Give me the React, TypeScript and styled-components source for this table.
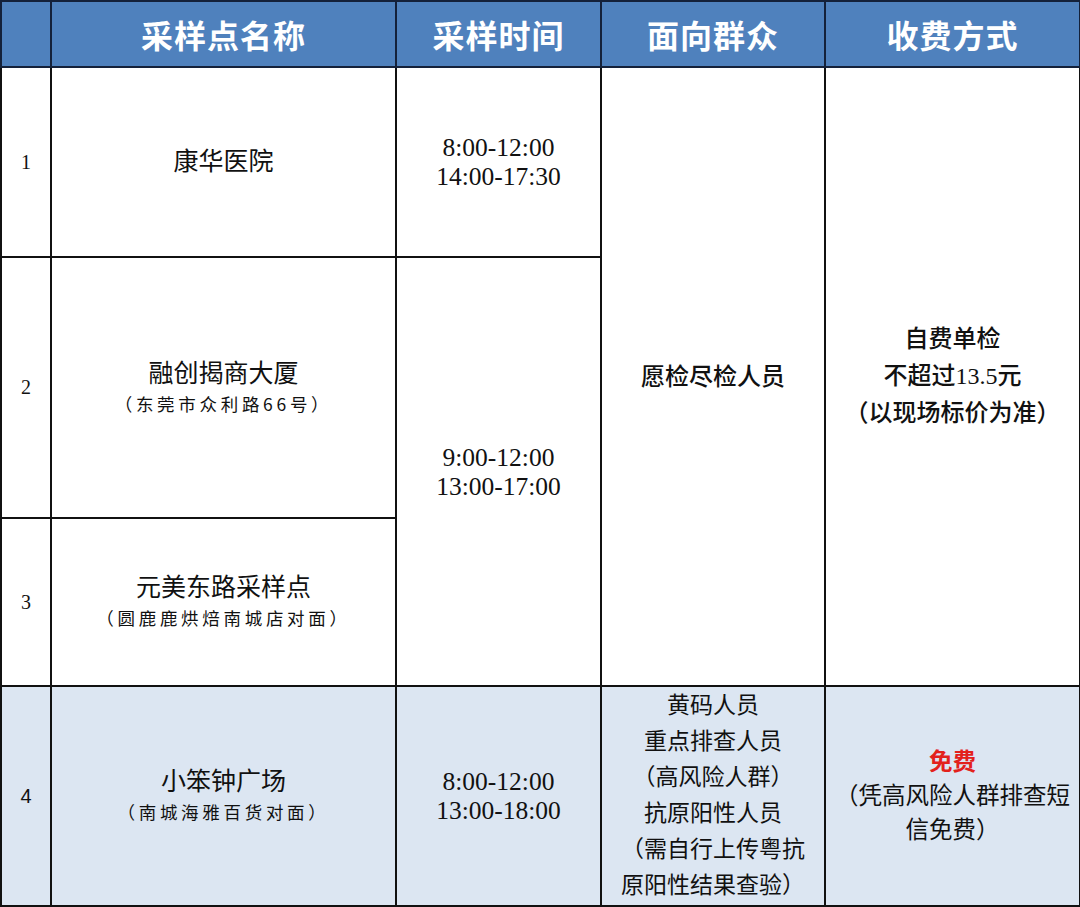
import React from 'react';
import styled, { createGlobalStyle } from 'styled-components';

const GlobalStyle = createGlobalStyle`
  html, body {
    margin: 0;
    padding: 0;
    background: #ffffff;
  }
  body {
    font-family: "Liberation Serif", "Noto Sans CJK SC", serif;
    color: #151515;
  }
`;

const Table = styled.table`
  width: 1079px;
  border-collapse: collapse;
  table-layout: fixed;
`;

const HeadCell = styled.th`
  height: 64px;
  padding: 0;
  background: #4f81bd;
  border: 2px solid #14213a;
  color: #ffffff;
  font-family: "Noto Sans CJK SC", sans-serif;
  font-size: 32px;
  font-weight: 700;
  text-align: center;
  vertical-align: middle;
  letter-spacing: 1px;
`;

const Row = styled.tr<{ $h: number }>`
  height: ${(p) => p.$h}px;
`;

const Cell = styled.td<{ $tint?: boolean }>`
  padding: 0;
  border: 2px solid #111111;
  background: ${(p) => (p.$tint ? '#dce6f2' : '#ffffff')};
  text-align: center;
  vertical-align: middle;
`;

const Num = styled.div<{ $sans?: boolean }>`
  font-family: ${(p) =>
    p.$sans ? '"Liberation Sans", sans-serif' : '"Liberation Serif", serif'};
  font-size: 20px;
  color: #111;
`;

const Name = styled.div`
  font-family: "Liberation Serif", "Noto Sans CJK SC", serif;
  font-size: 25px;
  line-height: 32px;
  color: #111;
`;

const Sub = styled.div`
  font-family: "Noto Sans CJK SC", serif;
  font-size: 17.5px;
  line-height: 28px;
  letter-spacing: 3.7px;
  color: #111;
`;

const Time = styled.div`
  font-family: "Liberation Serif", serif;
  font-size: 25.5px;
  line-height: 29px;
  color: #111;
`;

const Text = styled.div<{ $lh?: number; $size?: number; $weight?: number; $red?: boolean }>`
  font-family: "Liberation Serif", "Noto Sans CJK SC", serif;
  font-size: ${(p) => p.$size ?? 24}px;
  line-height: ${(p) => p.$lh ?? 36}px;
  font-weight: ${(p) => p.$weight ?? 400};
  color: ${(p) => (p.$red ? '#e3211c' : '#111')};
  white-space: nowrap;
`;

export default function App() {
  return (
    <>
      <GlobalStyle />
      <Table>
        <colgroup>
          <col style={{ width: 50 }} />
          <col style={{ width: 345 }} />
          <col style={{ width: 205 }} />
          <col style={{ width: 224 }} />
          <col style={{ width: 255 }} />
        </colgroup>
        <thead>
          <tr>
            <HeadCell></HeadCell>
            <HeadCell>采样点名称</HeadCell>
            <HeadCell>采样时间</HeadCell>
            <HeadCell>面向群众</HeadCell>
            <HeadCell>收费方式</HeadCell>
          </tr>
        </thead>
        <tbody>
          <Row $h={190}>
            <Cell>
              <Num>1</Num>
            </Cell>
            <Cell>
              <Name>康华医院</Name>
            </Cell>
            <Cell>
              <Time>8:00-12:00</Time>
              <Time>14:00-17:30</Time>
            </Cell>
            <Cell rowSpan={3}>
              <Text $weight={500}>愿检尽检人员</Text>
            </Cell>
            <Cell rowSpan={3}>
              <Text $weight={500} $lh={37}>自费单检</Text>
              <Text $weight={500} $lh={37}>不超过13.5元</Text>
              <Text $weight={500} $lh={37}>（以现场标价为准）</Text>
            </Cell>
          </Row>
          <Row $h={261}>
            <Cell>
              <Num>2</Num>
            </Cell>
            <Cell>
              <Name>融创揭商大厦</Name>
              <Sub>（东莞市众利路66号）</Sub>
            </Cell>
            <Cell rowSpan={2}>
              <Time>9:00-12:00</Time>
              <Time>13:00-17:00</Time>
            </Cell>
          </Row>
          <Row $h={168}>
            <Cell>
              <Num>3</Num>
            </Cell>
            <Cell>
              <Name>元美东路采样点</Name>
              <Sub>（圆鹿鹿烘焙南城店对面）</Sub>
            </Cell>
          </Row>
          <Row $h={220}>
            <Cell $tint>
              <Num $sans>4</Num>
            </Cell>
            <Cell $tint>
              <Name>小笨钟广场</Name>
              <Sub>（南城海雅百货对面）</Sub>
            </Cell>
            <Cell $tint>
              <Time>8:00-12:00</Time>
              <Time>13:00-18:00</Time>
            </Cell>
            <Cell $tint>
              <Text $size={23} $lh={36}>黄码人员</Text>
              <Text $size={23} $lh={36}>重点排查人员</Text>
              <Text $size={23} $lh={36}>（高风险人群）</Text>
              <Text $size={23} $lh={36}>抗原阳性人员</Text>
              <Text $size={23} $lh={36}>（需自行上传粤抗</Text>
              <Text $size={23} $lh={36}>原阳性结果查验）</Text>
            </Cell>
            <Cell $tint>
              <Text $size={23.5} $lh={34} $weight={700} $red>免费</Text>
              <Text $size={23.5} $lh={34}>（凭高风险人群排查短</Text>
              <Text $size={23.5} $lh={34}>信免费）</Text>
            </Cell>
          </Row>
        </tbody>
      </Table>
    </>
  );
}
